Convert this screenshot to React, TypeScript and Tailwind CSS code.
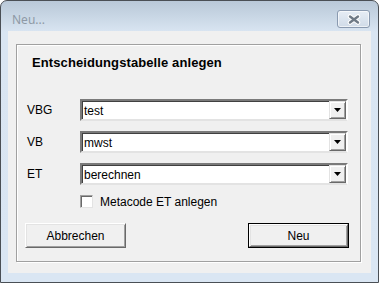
import React from "react";

const font = { fontFamily: '"Liberation Sans", Arial, sans-serif' };

function Combo({ value }: { value: string }) {
  return (
    <div className="flex h-[22px] w-[268px] border-2 border-t-[#7a7a7a] border-l-[#7a7a7a] border-b-[#e3e3e3] border-r-[#ffffff] shadow-[inset_1px_1px_0_#404040] bg-white">
      <div className="flex-1 flex items-center pl-[2px] pt-[1px] text-[12px] text-black">{value}</div>
      <div className="w-[17px] h-[18px] bg-[#f0f0f0] border border-t-[#e3e3e3] border-l-[#e3e3e3] border-b-[#696969] border-r-[#696969] shadow-[inset_1px_1px_0_#fff,inset_-1px_-1px_0_#a0a0a0] flex items-center justify-center">
        <svg width="7" height="4" viewBox="0 0 7 4">
          <path d="M0 0h7L3.5 4z" fill="#000" />
        </svg>
      </div>
    </div>
  );
}

function Row({ label, value }: { label: string; value: string }) {
  return (
    <div className="flex items-center">
      <div className="w-[53px] text-[12px] text-black">{label}</div>
      <Combo value={value} />
    </div>
  );
}

export default function App() {
  return (
    <div style={font} className="w-[379px] h-[283px] bg-white">
      <div className="w-[379px] h-[283px] flex flex-col border border-[#4a4f55] rounded-t-[7px] bg-[linear-gradient(180deg,#b9c8d8_0px,#c9d7e5_16px,#d9e5f2_31px,#dae6f3_100%)]">
        <div className="h-[30px] flex items-start justify-between pl-[11px] pr-[8px] shrink-0">
          <div
            className="text-[12px] text-[#8e99a5] mt-[11px] leading-[15px]"
            style={{ fontFamily: '"Noto Sans", "Open Sans", sans-serif' }}
          >
            Neu...
          </div>
          <div className="mt-[9px] w-[33px] h-[18px] rounded-[3px] border border-[#8a9ab0] bg-[linear-gradient(180deg,#e6edf5,#d0dbe8)] shadow-[inset_0_0_0_1px_rgba(255,255,255,0.6)] flex items-center justify-center">
            <svg width="14" height="11" viewBox="0 0 14 11">
              <path d="M3 2.5L11 8.5M11 2.5L3 8.5" stroke="#ffffff" strokeWidth="4.5" strokeLinecap="round" />
              <path d="M3 2.5L11 8.5M11 2.5L3 8.5" stroke="#6f7a86" strokeWidth="2.4" strokeLinecap="round" />
            </svg>
          </div>
        </div>
        <div className="flex-1 mx-[7px] mb-[9px] bg-[#f0f0f0] pt-[13px] pl-[8px] pr-[10px] pb-[11px] flex">
          <div className="flex-1 flex flex-col border border-[#a0a0a0] shadow-[inset_1px_1px_0_#fff,1px_1px_0_#fff] pt-[10px] pl-[10px] pr-[11px]">
            <div className="pl-[5px] text-[13px] font-bold leading-[16px] text-black tracking-[0.1px]">
              Entscheidungstabelle anlegen
            </div>
            <div className="mt-[28px] flex flex-col gap-[10px]">
              <Row label="VBG" value="test" />
              <Row label="VB" value="mwst" />
              <Row label="ET" value="berechnen" />
            </div>
            <div className="mt-[10px] ml-[53px] flex items-center h-[13px]">
              <div className="w-[13px] h-[13px] bg-white border border-t-[#a0a0a0] border-l-[#a0a0a0] border-b-[#e3e3e3] border-r-[#e3e3e3] shadow-[inset_1px_1px_0_#696969]" />
              <div className="ml-[7px] text-[12px] text-black">Metacode ET anlegen</div>
            </div>
            <div className="mt-[15px] flex justify-between pl-[-2px] -ml-[2px]">
              <div className="w-[101px] h-[25px] bg-[#f0f0f0] border border-t-[#ffffff] border-l-[#ffffff] border-b-[#696969] border-r-[#696969] shadow-[inset_1px_1px_0_#e3e3e3,inset_-1px_-1px_0_#a0a0a0] flex items-center justify-center text-[12px] text-black">
                Abbrechen
              </div>
              <div className="w-[101px] h-[25px] border border-black">
                <div className="w-full h-full bg-[#f0f0f0] border border-t-[#ffffff] border-l-[#ffffff] border-b-[#696969] border-r-[#696969] shadow-[inset_1px_1px_0_#e3e3e3,inset_-1px_-1px_0_#a0a0a0] flex items-center justify-center text-[12px] text-black">
                  Neu
                </div>
              </div>
            </div>
          </div>
        </div>
      </div>
    </div>
  );
}
